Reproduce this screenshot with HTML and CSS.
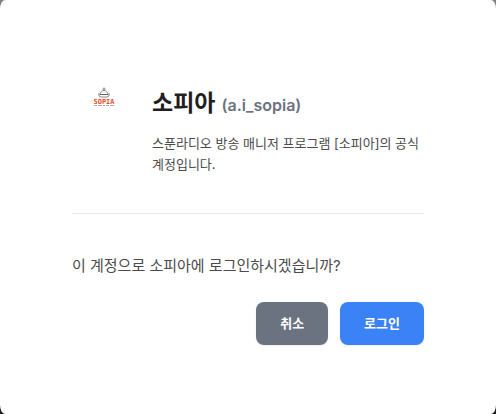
FILE: index.html
```html
<!DOCTYPE html>
<html lang="ko">
<head>
<meta charset="utf-8">
<meta name="viewport" content="width=device-width, initial-scale=1">
<title>소피아 로그인</title>
<link rel="stylesheet" href="styles.css">
</head>
<body>
<main class="card">
  <section class="profile">
    <svg class="avatar" viewBox="0 0 64 64" role="img" aria-label="SOPIA">
      <g fill="none" stroke="#888" stroke-width="1">
        <circle cx="32" cy="17" r="1" />
        <path d="M28 23a4 4.500 0 0 1 8 0" />
        <path d="M27 21q-1 4 2 4h6q3 0 2-4" />
        <path d="M28 22.500h8" stroke="#666" />
      </g>
      <text class="logo-name" x="32" y="32" text-anchor="middle">SOPIA</text>
      <path d="M22 33.500h20" stroke="#aaa" stroke-width="1" stroke-dasharray="3 1 4 1 2 1" />
    </svg>
    <div class="info">
      <h1 class="name">소피아 <span class="tag">(a.i_sopia)</span></h1>
      <p class="bio">스푼라디오 방송 매니저 프로그램 [소피아]의 공식 계정입니다.</p>
    </div>
  </section>
  <section class="confirm">
    <p class="question">이 계정으로 소피아에 로그인하시겠습니까?</p>
    <div class="actions">
      <button class="button cancel" type="button">취소</button>
      <button class="button login" type="button">로그인</button>
    </div>
  </section>
</main>
</body>
</html>
```
FILE: styles.css
```css
* {
  box-sizing: border-box;
}

body {
  margin: 0;
  background: linear-gradient(#808080 50%, #1c1c1c 50%);
  font-family: Inter, "Noto Sans CJK KR", sans-serif;
  color: #4b4b4b;
}

.card {
  min-height: 100vh;
  padding: 72px 72px 64px;
  background: #fff;
  border-radius: 5px / 9px;
}

.profile {
  display: flex;
  gap: 16px;
  padding-bottom: 38px;
  border-bottom: 1px solid #e5e7eb;
}

.avatar {
  flex: none;
  width: 64px;
  height: 64px;
}

.logo-name {
  font: bold 7px "DejaVu Sans Mono", monospace;
  fill: #f04a23;
}

.info {
  flex: 1;
  padding-top: 13px;
}

.name {
  display: flex;
  align-items: baseline;
  gap: 6px;
  margin: 0 0 10px;
  font-size: 23px;
  line-height: 36px;
  color: #1f1f1f;
}

.tag {
  font-size: 16px;
  font-weight: 600;
  color: #6b7280;
}

.bio {
  margin: 0;
  font-size: 13px;
  line-height: 21px;
}

.confirm {
  padding-top: 40px;
}

.question {
  margin: 0 0 24px;
  font-size: 15px;
  line-height: 24px;
}

.actions {
  display: flex;
  justify-content: flex-end;
  gap: 12px;
}

.button {
  padding: 12px 24px;
  border: 0;
  border-radius: 8px;
  font-family: inherit;
  font-size: 13px;
  font-weight: 700;
  line-height: 19px;
  color: #fff;
  box-shadow: 0 1px 2px rgba(0, 0, 0, 0.08);
}

.cancel {
  background: #6b7280;
}

.login {
  background: #3b82f6;
}
```
